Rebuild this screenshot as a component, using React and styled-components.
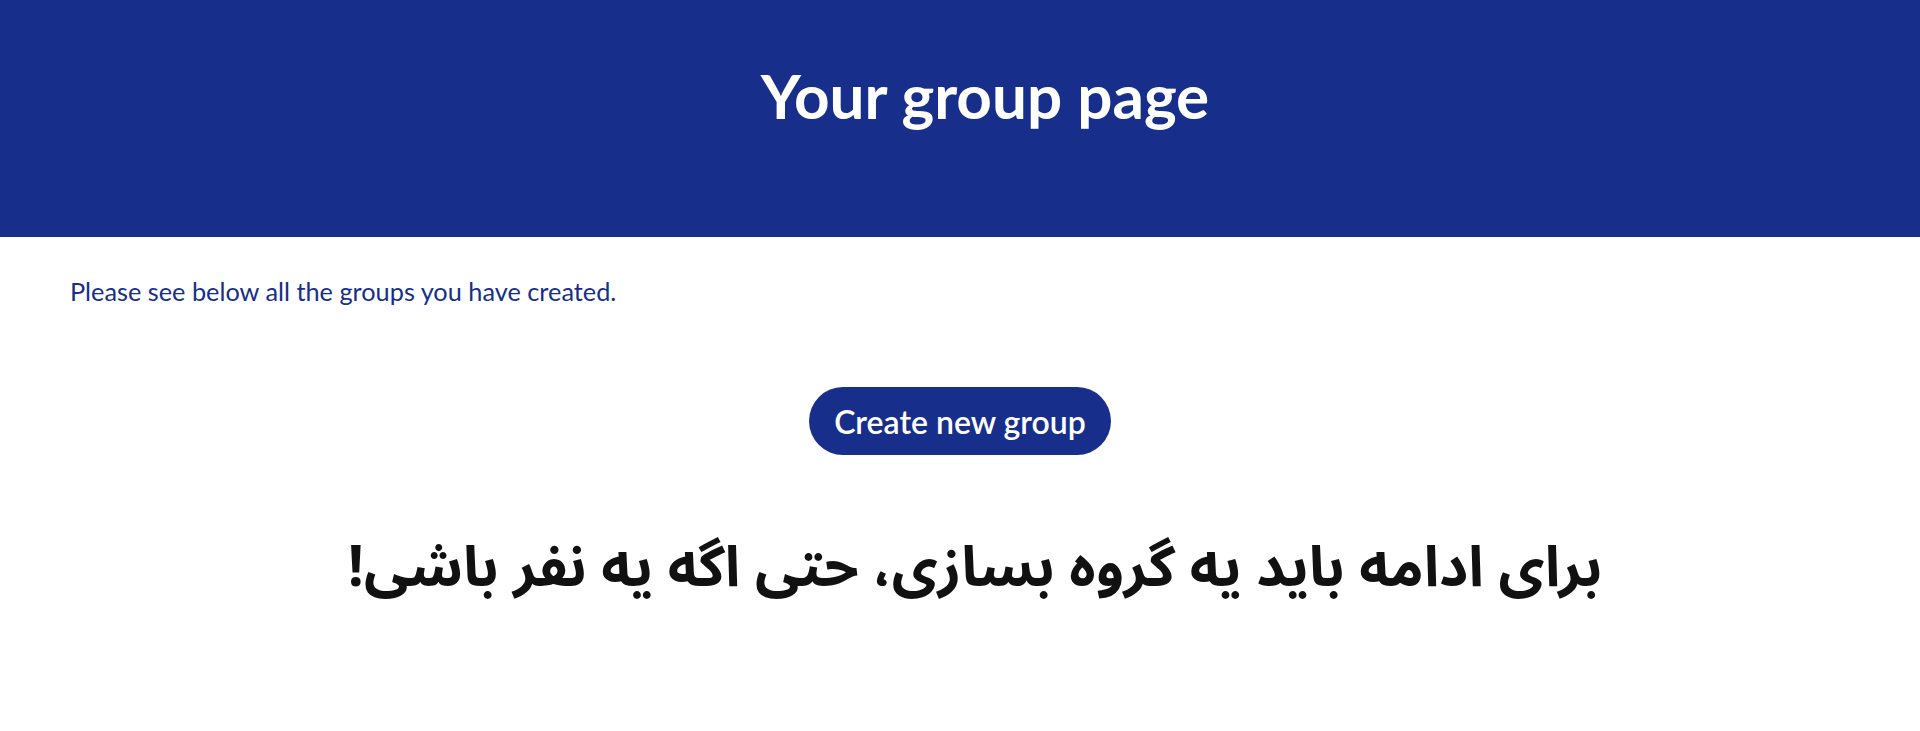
import styled, { createGlobalStyle } from 'styled-components';

const GlobalStyle = createGlobalStyle`
	html, body {
		margin: 0;
		padding: 0;
		background: #ffffff;
	}
	body {
		font-family: Lato, "Open Sans", sans-serif;
	}
`;

const Header = styled.header`
	height: 237px;
	background-color: #172f8a;
	box-sizing: border-box;
	padding: 55px 0 0 50px;
	display: flex;
	justify-content: center;
	align-items: flex-start;
`;

const Title = styled.h1`
	margin: 0;
	color: #ffffff;
	font-family: Lato, "Open Sans", sans-serif;
	font-weight: 700;
	font-size: 62px;
	line-height: 80px;
`;

const Main = styled.main`
	padding: 38px 70px 0;
	display: flex;
	flex-direction: column;
`;

const Intro = styled.p`
	margin: 0;
	color: #172f8a;
	font-size: 25.3px;
	line-height: 32px;
`;

const Actions = styled.div`
	display: flex;
	justify-content: center;
	margin-top: 80px;
`;

const Button = styled.button`
	height: 68px;
	padding: 0 25px;
	border: none;
	border-radius: 34px;
	background-color: #172f8a;
	color: #ffffff;
	font-family: Lato, "Open Sans", sans-serif;
	font-size: 32px;
	font-weight: 600;
	cursor: pointer;
`;

const Notice = styled.h2`
	margin: 78px 0 0;
	padding-left: 30px;
	text-align: center;
	color: #111111;
	font-family: "Noto Sans Arabic", "Noto Naskh Arabic", "DejaVu Sans", sans-serif;
	font-weight: 700;
	font-size: 56.5px;
	line-height: 70px;
`;

export default function App() {
	return (
		<>
			<GlobalStyle />
			<Header>
				<Title>Your group page</Title>
			</Header>
			<Main>
				<Intro>Please see below all the groups you have created.</Intro>
				<Actions>
					<Button>Create new group</Button>
				</Actions>
				<Notice dir="rtl">برای ادامه باید یه گروه بسازی، حتی اگه یه نفر باشی!</Notice>
			</Main>
		</>
	);
}
